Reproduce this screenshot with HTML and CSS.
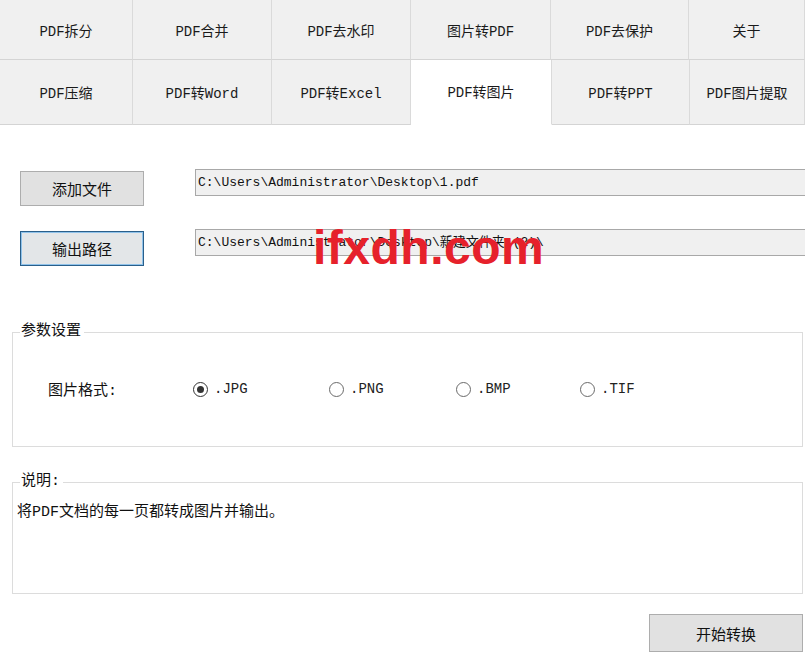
FILE: index.html
```html
<!DOCTYPE html>
<html lang="zh-CN">
<head>
    <meta charset="UTF-8">
    <meta name="viewport" content="width=device-width, initial-scale=1.0">
    <link rel="stylesheet" href="styles.css">
</head>
<body>
    <div class="tabs">
        <div class="tab-row row-top">
            <div class="tab w133">PDF拆分</div>
            <div class="tab w139">PDF合并</div>
            <div class="tab w139">PDF去水印</div>
            <div class="tab w140">图片转PDF</div>
            <div class="tab w138">PDF去保护</div>
            <div class="tab w116">关于</div>
        </div>
        <div class="tab-row row-bottom">
            <div class="tab w133">PDF压缩</div>
            <div class="tab w139">PDF转Word</div>
            <div class="tab w139">PDF转Excel</div>
            <div class="tab w141 active">PDF转图片</div>
            <div class="tab w138">PDF转PPT</div>
            <div class="tab w115">PDF图片提取</div>
        </div>
    </div>

    <div class="file-row first">
        <button class="btn">添加文件</button>
        <div class="path-box">C:\Users\Administrator\Desktop\1.pdf</div>
    </div>
    <div class="file-row second">
        <button class="btn focused">输出路径</button>
        <div class="path-box">C:\Users\Administrator\Desktop\新建文件夹 (2)\</div>
    </div>

    <!-- 参数设置 -->
    <fieldset class="group settings">
        <legend>参数设置</legend>
        <div class="format-row">
            <span class="format-label">图片格式:</span>
            <label class="option opt1"><span class="radio checked"></span>.JPG</label>
            <label class="option opt2"><span class="radio"></span>.PNG</label>
            <label class="option opt3"><span class="radio"></span>.BMP</label>
            <label class="option"><span class="radio"></span>.TIF</label>
        </div>
    </fieldset>

    <!-- 说明 -->
    <fieldset class="group notes">
        <legend>说明:</legend>
        <p class="note-text">将PDF文档的每一页都转成图片并输出。</p>
    </fieldset>

    <div class="actions">
        <button class="btn start">开始转换</button>
    </div>

    <div class="watermark">ifxdh.com</div>
</body>
</html>
```

FILE: styles.css
```css
/* page */
body {
    margin: 0;
    width: 805px;
    height: 656px;
    overflow: hidden;
    position: relative;
    background-color: #fff;
    color: #111;
    font-family: "Liberation Mono", "Noto Sans CJK SC", monospace;
}

/* tab strip */
.tabs {
    display: flex;
    flex-direction: column;
}

.tab-row {
    display: flex;
}

.row-top {
    height: 60px;
}

.row-bottom {
    height: 65px;
}

.tab {
    flex: none;
    box-sizing: border-box;
    display: flex;
    align-items: center;
    justify-content: center;
    background-color: #f0f0f0;
    border-right: 1px solid #dadada;
    border-bottom: 1px solid #d4d4d4;
    font-size: 14px;
    color: #1a1a1a;
}

.tab.active {
    background-color: #fff;
    border-bottom-color: #fff;
    padding-bottom: 3px;
}

.w115 { width: 115px; }
.w116 { width: 116px; }
.w133 { width: 133px; }
.w138 { width: 138px; }
.w139 { width: 139px; }
.w140 { width: 140px; }
.w141 { width: 141px; }

/* file rows */
.file-row {
    display: flex;
    align-items: flex-start;
    padding-left: 20px;
}

.file-row.first {
    margin-top: 44px;
}

.file-row.second {
    margin-top: 23px;
}

.btn {
    box-sizing: border-box;
    width: 124px;
    height: 35px;
    margin: 2px 0 0 0;
    padding: 0;
    background-color: #e1e1e1;
    border: 1px solid #adadad;
    font-family: "Noto Sans CJK SC", sans-serif;
    font-size: 15px;
    color: #111;
}

.btn.focused {
    border: 1px solid #2a5f8a;
    box-shadow: inset 0 0 0 1px #8fc2ea;
    background-color: #e3e6e8;
}

.path-box {
    flex: 1;
    box-sizing: border-box;
    height: 27px;
    margin-left: 51px;
    padding-left: 2px;
    line-height: 25px;
    background-color: #f0f0f0;
    border: 1px solid #a8a8a8;
    border-right: none;
    font-size: 13px;
    white-space: nowrap;
    overflow: hidden;
}

/* group boxes */
.group {
    margin: 0 2px 0 12px;
    padding: 0;
    min-width: 0;
    border: 1px solid #dcdcdc;
}

.group legend {
    margin-left: 7px;
    padding: 0 3px 0 1px;
    font-size: 15px;
    line-height: 20px;
}

.settings {
    margin-top: 56px;
    padding: 37px 0 47px 0;
}

.format-row {
    display: flex;
    align-items: center;
    height: 20px;
    padding-left: 35px;
}

.format-label {
    width: 145px;
    font-size: 15px;
}

.option {
    display: flex;
    align-items: center;
    gap: 6px;
    font-size: 14px;
    color: #222;
}

.opt1 { width: 136px; }
.opt2 { width: 127px; }
.opt3 { width: 124px; }

.radio {
    box-sizing: border-box;
    width: 15px;
    height: 15px;
    border: 1px solid #6a6a6a;
    border-radius: 50%;
    background-color: #fff;
    display: flex;
    align-items: center;
    justify-content: center;
}

.radio.checked {
    border-color: #333;
}

.radio.checked::after {
    content: "";
    width: 7px;
    height: 7px;
    border-radius: 50%;
    background-color: #333;
}

.notes {
    margin-top: 25px;
    padding: 11px 0 70px 0;
}

.note-text {
    margin: 0;
    padding-left: 4px;
    font-size: 15px;
    line-height: 20px;
}

/* bottom button */
.actions {
    display: flex;
    justify-content: flex-end;
    margin-top: 18px;
    padding-right: 2px;
}

.btn.start {
    width: 154px;
    height: 38px;
}

/* site watermark over the screenshot */
.watermark {
    position: absolute;
    left: 313px;
    top: 220px;
    font-family: "Liberation Sans", sans-serif;
    font-weight: bold;
    font-size: 48px;
    line-height: 56px;
    letter-spacing: 0.5px;
    color: #e6212b;
}
```
